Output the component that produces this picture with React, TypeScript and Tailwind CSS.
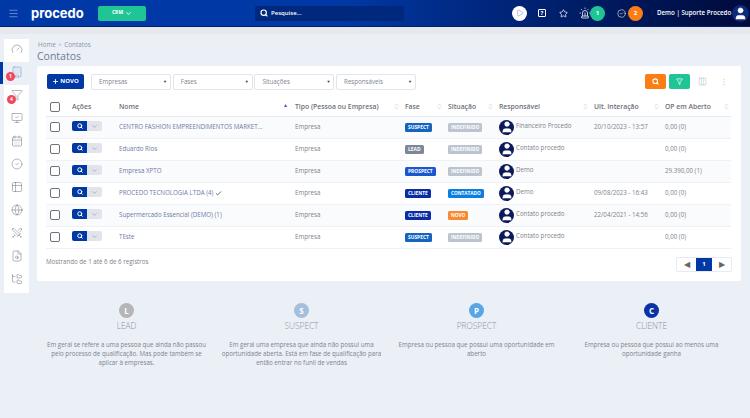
import { Building, CalendarDays, Check, ChevronDown, CircleCheck, Columns3, EllipsisVertical, FileSearch, Filter, FolderTree, Gauge, Globe, Menu, MonitorCheck, Play, Plus, Search, Siren, Star, Swords, Table2, User, ChevronsUpDown } from "lucide-react";

const rows = [
  { nome: "CENTRO FASHION EMPREENDIMENTOS MARKET...", fase: "SUSPECT", sit: "INDEFINIDO", resp: "Financeiro Procedo", ult: "20/10/2023 - 13:57", op: "0,00 (0)" },
  { nome: "Eduardo Rios", fase: "LEAD", sit: "INDEFINIDO", resp: "Contato procedo", ult: "", op: "0,00 (0)" },
  { nome: "Empresa XPTO", fase: "PROSPECT", sit: "INDEFINIDO", resp: "Demo", ult: "", op: "29.390,00 (1)" },
  { nome: "PROCEDO TECNOLOGIA LTDA (4)", fase: "CLIENTE", sit: "CONTATADO", resp: "Demo", ult: "09/08/2023 - 16:43", op: "0,00 (0)", check: true },
  { nome: "Supermercado Essencial (DEMO) (1)", fase: "CLIENTE", sit: "NOVO", resp: "Contato procedo", ult: "22/04/2021 - 14:56", op: "0,00 (0)" },
  { nome: "TEste", fase: "SUSPECT", sit: "INDEFINIDO", resp: "Contato procedo", ult: "", op: "0,00 (0)" },
];

const faseColor: Record<string, string> = {
  SUSPECT: "bg-[#1565c0]",
  LEAD: "bg-[#7c8798]",
  PROSPECT: "bg-[#1a56d0]",
  CLIENTE: "bg-[#0a2da3]",
};
const sitColor: Record<string, string> = {
  INDEFINIDO: "bg-[#bcc4d0]",
  CONTATADO: "bg-[#0b7fe0]",
  NOVO: "bg-[#fb8a2e]",
};

const cards = [
  { l: "L", t: "LEAD", c: "bg-[#b5b5b5]", d: "Em geral se refere a uma pessoa que ainda não passou pelo processo de qualificação. Mas pode também se aplicar à empresas." },
  { l: "S", t: "SUSPECT", c: "bg-[#a3bfdc]", d: "Em geral uma empresa que ainda não possui uma oportunidade aberta. Está em fase de qualificação para então entrar no funil de vendas" },
  { l: "P", t: "PROSPECT", c: "bg-[#5aa5e6]", d: "Empresa ou pessoa que possui uma oportunidade em aberto" },
  { l: "C", t: "CLIENTE", c: "bg-[#0a33a6]", d: "Empresa ou pessoa que possui ao menos uma oportunidade ganha" },
];

const sideIcons = [Gauge, Building, Filter, MonitorCheck, CalendarDays, CircleCheck, Table2, Globe, Swords, FileSearch, FolderTree];

function Avatar() {
  return (
    <span className="flex h-[15px] w-[15px] items-center justify-center overflow-hidden rounded-full bg-[#0a1a5c]">
      <User size={14} className="text-white" fill="white" strokeWidth={1} />
    </span>
  );
}

function Th({ label, w, sort = true, up = false, last = false }: { label: string; w: string; sort?: boolean; up?: boolean; last?: boolean }) {
  return (
    <th className={`${w} p-0 text-left text-[6.8px] font-semibold text-[#6b6f7a]`}>
      <div className={`flex items-center justify-between ${up ? "pr-[7px]" : last ? "pr-[1px]" : "pr-[5px]"}`}>
        <span>{label}</span>
        {sort && <ChevronsUpDown size={7} className="shrink-0 text-[#c9ced6]" strokeWidth={2.5} />}
        {up && <span className="mb-[3px] text-[5px] leading-none text-[#3f51c4]">▲</span>}
      </div>
    </th>
  );
}

function Select({ label }: { label: string }) {
  return (
    <div className="flex h-[16px] w-[80px] items-center justify-between rounded-[2px] border border-[#e2e5ea] bg-white pl-[7px] pr-[3px] text-[6.2px] text-[#80858f]">
      <span>{label}</span>
      <span className="text-[4px] text-[#333]">▼</span>
    </div>
  );
}

export default function App() {
  return (
    <div className="h-[418px] w-[750px] overflow-hidden bg-[#ebf0f7] font-['Open_Sans',sans-serif]">
      <header className="flex h-[27px] items-center border-b border-[#00206e] bg-gradient-to-r from-[#0039a6] via-[#0039a6] via-45% to-[#000a3c] pl-[8px]">
        <Menu size={11} className="text-[#8fa8dd]" strokeWidth={1.5} />
        <span className="ml-[12px] w-[67px] font-['Inter',sans-serif] text-[13px] leading-none font-bold text-white">procedo</span>
        <div className="flex h-[15px] w-[48px] items-center justify-center gap-[2px] rounded-[2px] bg-[#1fc594] text-[5px] font-bold text-white">
          CRM <ChevronDown size={7} strokeWidth={3} />
        </div>
        <div className="ml-[109px] flex h-[15px] w-[149px] items-center gap-[3px] rounded-[2px] bg-[#00297e] pl-[5px] text-[6px] font-semibold text-white">
          <Search size={8} strokeWidth={3.5} /> Pesquise...
        </div>
        <div className="ml-[108px] flex h-[15px] w-[15px] items-center justify-center rounded-full bg-white">
          <Play size={8} className="text-[#8aa3d8]" />
        </div>
        <span className="ml-[11px] flex h-[8px] w-[8px] items-center justify-center rounded-[1px] border border-white text-[6px] leading-none font-bold text-white">?</span>
        <Star size={9} className="ml-[13px] text-white" strokeWidth={2} />
        <Siren size={12} className="ml-[11px] text-white" strokeWidth={1.5} />
        <span className="-ml-[1px] flex h-[15px] w-[15px] items-center justify-center rounded-full bg-[#1fc594] text-[6px] font-bold text-white">1</span>
        <CircleCheck size={9} className="ml-[12px] text-white" strokeWidth={1.5} />
        <span className="ml-[2px] flex h-[15px] w-[15px] items-center justify-center rounded-full bg-[#fb7d14] text-[6px] font-bold text-white">2</span>
        <span className="ml-[14px] w-[71px] text-[6.2px] font-semibold whitespace-nowrap text-white">Demo | Suporte Procedo</span>
        <span className="ml-[4px] flex h-[17px] w-[17px] items-center justify-center overflow-hidden rounded-full bg-[#0a2a7c]">
          <User size={15} className="text-white" fill="white" strokeWidth={1} />
        </span>
      </header>
      <div className="h-[7px] bg-[#e6e8ec]" />
      <div className="flex">
        <aside className="relative ml-[4px] mt-[5px] h-[254px] w-[25px]">
          {sideIcons.map((I, i) => (
            <div key={i} className={`relative flex h-[23.1px] items-center justify-center pb-[4px] ${i === 1 ? "bg-[#ebf0f7]" : "bg-white"}`}>
              <I size={12} strokeWidth={1.1} className={i === 1 ? "text-[#6f94cf]" : "text-[#777b80]"} />
              {i === 1 && <span className="absolute left-[2px] top-[10px] flex h-[9px] w-[9px] items-center justify-center rounded-full bg-[#f2475a] text-[5px] font-bold text-white">1</span>}
              {i === 2 && <span className="absolute left-[3px] top-[10px] flex h-[9px] w-[9px] items-center justify-center rounded-full bg-[#f2475a] text-[5px] font-bold text-white">4</span>}
            </div>
          ))}
          <span className="absolute -left-[4px] top-[23px] h-[22px] w-[3px] bg-[#0039a6]" />
        </aside>
        <main className="ml-[8px] w-[704px]">
          <div className="mt-[6px] flex items-center gap-[3px] pl-[1px] text-[6.3px] leading-[9px] text-[#8b93a5]">
            <span>Home</span><span className="text-[5px]">»</span><span>Contatos</span>
          </div>
          <h1 className="text-[10.5px] leading-[15px] font-normal text-[#6d7c90]">Contatos</h1>
          <section className="mt-[2px] h-[215px] rounded-[2px] bg-white px-[9px]">
            <div className="flex h-[31px] items-center">
              <button className="ml-[1px] flex h-[15px] w-[37px] items-center justify-center gap-[1px] rounded-[2px] bg-[#0039a6] text-[6px] font-bold text-white">
                <Plus size={7} strokeWidth={3} /> NOVO
              </button>
              <div className="ml-[7px] flex gap-[1.7px]">
                <Select label="Empresas" />
                <Select label="Fases" />
                <Select label="Situações" />
                <Select label="Responsáveis" />
              </div>
              <div className="ml-auto mr-[4px] flex items-center">
                <span className="flex h-[15px] w-[21px] items-center justify-center rounded-[2px] bg-[#fb7d14] text-white"><Search size={7} strokeWidth={3.5} /></span>
                <span className="ml-[3px] flex h-[15px] w-[21px] items-center justify-center rounded-[2px] bg-[#1fc594] text-white"><Filter size={7} strokeWidth={2.5} /></span>
                <Columns3 size={9} className="ml-[8px] text-[#aab0ba]" strokeWidth={1.2} />
                <EllipsisVertical size={8} className="ml-[13px] text-[#d5d8de]" />
              </div>
            </div>
            <table className="mt-[1px] w-[685px] table-fixed border-collapse">
              <thead>
                <tr className="h-[18px] border-b border-[#e6eaf2]">
                  <th className="w-[26px] p-0 pl-[4px]"><span className="block h-[10px] w-[10px] rounded-[2px] border border-[#6f7378]" /></th>
                  <Th label="Ações" w="w-[47px]" sort={false} />
                  <Th label="Nome" w="w-[176px]" sort={false} up />
                  <Th label="Tipo (Pessoa ou Empresa)" w="w-[110px]" />
                  <Th label="Fase" w="w-[43px]" />
                  <Th label="Situação" w="w-[51px]" />
                  <Th label="Responsável" w="w-[95px]" />
                  <Th label="Ult. Interação" w="w-[71px]" />
                  <Th label="OP em Aberto" w="w-[66px]" last />
                </tr>
              </thead>
              <tbody>
                {rows.map((r, i) => (
                  <tr key={i} className={`h-[22px] border-b border-[#eef1f6] text-[6.2px] text-[#7e828b] ${i % 2 === 0 ? "bg-[#fafbfd]" : "bg-white"}`}>
                    <td className="p-0 pl-[4px]"><span className="block h-[10px] w-[10px] rounded-[2px] border border-[#6f7378] bg-white" /></td>
                    <td className="p-0">
                      <div className="mb-[2px] flex h-[10px] w-[30px] overflow-hidden rounded-[2px]">
                        <span className="flex w-[15px] items-center justify-center bg-[#0039a6] text-white"><Search size={6} strokeWidth={4} /></span>
                        <span className="flex w-[15px] items-center justify-center bg-[#e1e4ea] text-[#8d93a0]"><ChevronDown size={7} strokeWidth={2} /></span>
                      </div>
                    </td>
                    <td className="truncate p-0 text-[#6e7aa6]">
                      {r.nome}{r.check && <Check size={7} strokeWidth={3} className="ml-[2px] inline text-[#555]" />}
                    </td>
                    <td className="p-0 pb-[1px]">Empresa</td>
                    <td className="p-0"><span className={`${faseColor[r.fase]} inline-block rounded-[1.5px] px-[3px] text-[4.9px] leading-[9px] font-bold text-white`}>{r.fase}</span></td>
                    <td className="p-0"><span className={`${sitColor[r.sit]} inline-block rounded-[1.5px] px-[3px] text-[4.7px] leading-[9px] font-bold text-white`}>{r.sit}</span></td>
                    <td className="p-0">
                      <div className="flex items-center gap-[2px]"><Avatar /><span className="mb-[2px]">{r.resp}</span></div>
                    </td>
                    <td className="p-0">{r.ult}</td>
                    <td className="p-0">{r.op}</td>
                  </tr>
                ))}
              </tbody>
            </table>
            <div className="flex items-center justify-between pt-[8px]">
              <span className="mb-[4px] text-[6.2px] text-[#7e828b]">Mostrando de 1 até 6 de 6 registros</span>
              <div className="flex h-[15px] items-stretch rounded-[2px] border border-[#e8eaee] text-[6px] text-[#666]">
                <span className="flex w-[19px] items-center justify-center text-[8px]">◀</span>
                <span className="flex w-[16px] items-center justify-center bg-[#0039a6] font-bold text-white">1</span>
                <span className="flex w-[19px] items-center justify-center text-[8px]">▶</span>
              </div>
            </div>
          </section>
          <div className="ml-[2px] mt-[22px] grid w-[700px] grid-cols-4">
            {cards.map((c) => (
              <div key={c.t} className="flex flex-col items-center px-[5px]">
                <span className={`${c.c} flex h-[15px] w-[15px] items-center justify-center rounded-full text-[8px] font-bold text-white`}>{c.l}</span>
                <span className="mt-[2px] text-[8.3px] leading-[12px] font-light text-[#8e939c]">{c.t}</span>
                <p className="mt-[8px] text-center text-[6.2px] leading-[9px] text-[#7e828b]">{c.d}</p>
              </div>
            ))}
          </div>
        </main>
      </div>
    </div>
  );
}
